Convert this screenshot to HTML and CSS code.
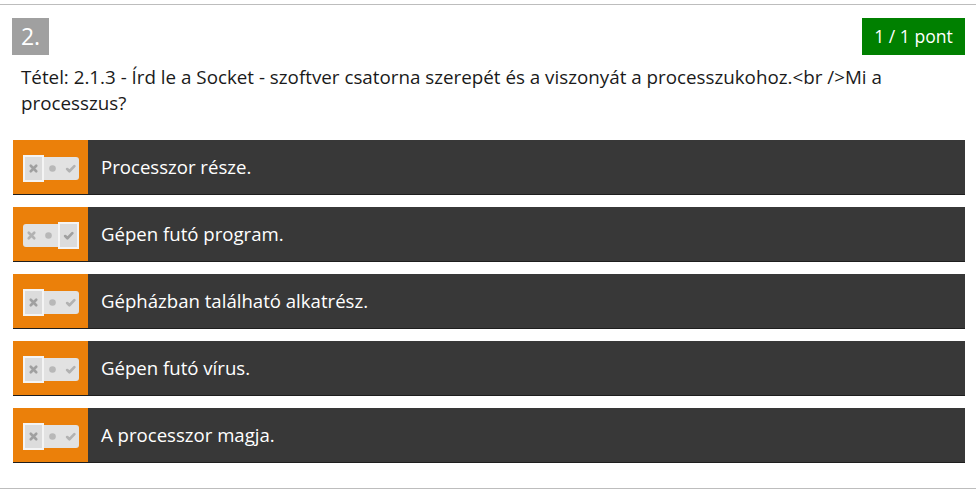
FILE: index.html
```html
<!DOCTYPE html>
<html lang="hu">
<head>
<meta charset="utf-8">
<link rel="stylesheet" href="styles.css">
</head>
<body>
<div class="card">
  <div class="head">
    <div class="num">2.</div>
    <div class="score">1 / 1 pont</div>
  </div>
  <p class="question">Tétel: 2.1.3 - Írd le a Socket - szoftver csatorna szerepét és a viszonyát a processzukohoz.&lt;br /&gt;Mi a processzus?</p>
  <div class="answers">
    <div class="row">
      <div class="side"><div class="toggle sel-x"><span class="seg x"><svg viewBox="0 0 10 10"><path d="M2.5 2.5L7.5 7.5M7.5 2.5L2.5 7.5"/></svg></span><span class="seg o"><svg viewBox="0 0 10 10"><circle cx="5" cy="5" r="3"/></svg></span><span class="seg v"><svg viewBox="0 0 10 10"><path d="M2 5.5L4 7.5L8.5 2.8"/></svg></span></div></div>
      <div class="text">Processzor része.</div>
    </div>
    <div class="row">
      <div class="side"><div class="toggle sel-v"><span class="seg x"><svg viewBox="0 0 10 10"><path d="M2.5 2.5L7.5 7.5M7.5 2.5L2.5 7.5"/></svg></span><span class="seg o"><svg viewBox="0 0 10 10"><circle cx="5" cy="5" r="3"/></svg></span><span class="seg v"><svg viewBox="0 0 10 10"><path d="M2 5.5L4 7.5L8.5 2.8"/></svg></span></div></div>
      <div class="text">Gépen futó program.</div>
    </div>
    <div class="row">
      <div class="side"><div class="toggle sel-x"><span class="seg x"><svg viewBox="0 0 10 10"><path d="M2.5 2.5L7.5 7.5M7.5 2.5L2.5 7.5"/></svg></span><span class="seg o"><svg viewBox="0 0 10 10"><circle cx="5" cy="5" r="3"/></svg></span><span class="seg v"><svg viewBox="0 0 10 10"><path d="M2 5.5L4 7.5L8.5 2.8"/></svg></span></div></div>
      <div class="text">Gépházban található alkatrész.</div>
    </div>
    <div class="row">
      <div class="side"><div class="toggle sel-x"><span class="seg x"><svg viewBox="0 0 10 10"><path d="M2.5 2.5L7.5 7.5M7.5 2.5L2.5 7.5"/></svg></span><span class="seg o"><svg viewBox="0 0 10 10"><circle cx="5" cy="5" r="3"/></svg></span><span class="seg v"><svg viewBox="0 0 10 10"><path d="M2 5.5L4 7.5L8.5 2.8"/></svg></span></div></div>
      <div class="text">Gépen futó vírus.</div>
    </div>
    <div class="row">
      <div class="side"><div class="toggle sel-x"><span class="seg x"><svg viewBox="0 0 10 10"><path d="M2.5 2.5L7.5 7.5M7.5 2.5L2.5 7.5"/></svg></span><span class="seg o"><svg viewBox="0 0 10 10"><circle cx="5" cy="5" r="3"/></svg></span><span class="seg v"><svg viewBox="0 0 10 10"><path d="M2 5.5L4 7.5L8.5 2.8"/></svg></span></div></div>
      <div class="text">A processzor magja.</div>
    </div>
  </div>
</div>
</body>
</html>
```
FILE: styles.css
```css
html, body {
  margin: 0;
  padding: 0;
  background: #fff;
}
body {
  font-family: "Open Sans", "Liberation Sans", sans-serif;
  color: #222;
}
.card {
  margin-top: 4px;
  border-top: 1px solid #bdbdbd;
  border-bottom: 1px solid #bdbdbd;
  padding: 13px 11px 25px 12px;
}
.head {
  display: flex;
  justify-content: space-between;
  align-items: flex-start;
}
.num {
  width: 37px;
  height: 37px;
  background: #a0a0a0;
  color: #fff;
  font-size: 23px;
  line-height: 37px;
  text-align: center;
}
.score {
  height: 37px;
  width: 103px;
  background: #008000;
  color: #fff;
  font-size: 17.6px;
  line-height: 37px;
  text-align: center;
}
.question {
  margin: 9px 0 0 9px;
  font-size: 18.8px;
  line-height: 26px;
  color: #1a1a1a;
}
.answers {
  margin-top: 24px;
  margin-left: 1px;
  display: flex;
  flex-direction: column;
  gap: 12px;
}
.row {
  display: flex;
  height: 55px;
  background: #383838;
  border-bottom: 1px solid #1e1e1e;
  box-sizing: border-box;
}
.side {
  width: 75px;
  background: #eb800a;
  display: flex;
  align-items: center;
  justify-content: center;
  padding-left: 1px;
  box-sizing: border-box;
}
.toggle {
  display: flex;
  width: 56px;
  height: 23px;
  background: #e2e2e2;
  border-radius: 3px;
  margin-top: 2px;
}
.seg {
  flex: 1;
  display: flex;
  align-items: center;
  justify-content: center;
  box-sizing: border-box;
}
.seg svg {
  width: 11px;
  height: 11px;
  fill: none;
  stroke: #b2b2b2;
  stroke-width: 2.4;
  stroke-linecap: round;
  stroke-linejoin: round;
}
.seg.o svg circle {
  fill: #b8b8b8;
  stroke: none;
}
.sel-x .x,
.sel-v .v {
  border: 2px solid #f4f4f4;
  margin: -2px 0;
  background: #dcdcdc;
}
.sel-x .x svg,
.sel-v .v svg {
  stroke: #a0a0a0;
}
.text {
  flex: 1;
  color: #fff;
  font-size: 18.6px;
  line-height: 55px;
  padding-left: 13px;
  margin-top: -1px;
}
```
